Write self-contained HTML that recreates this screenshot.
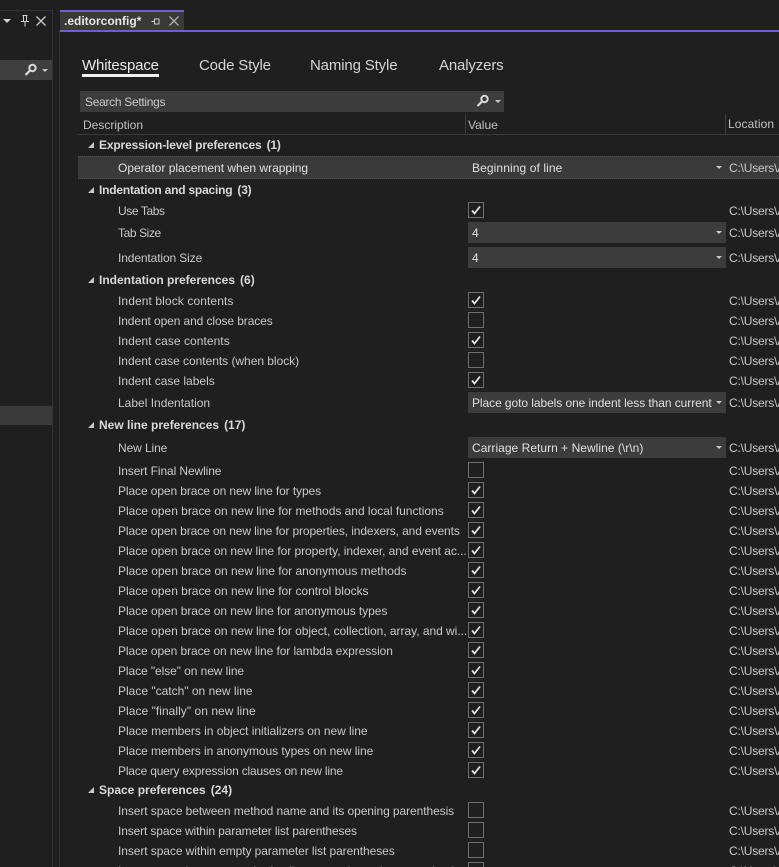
<!DOCTYPE html>
<html><head><meta charset="utf-8">
<style>
html,body{margin:0;padding:0;background:#1e1e1e}
#p{position:relative;width:779px;height:867px;overflow:hidden;background:#1f1f1f;font-family:"Liberation Sans",sans-serif;font-size:12px;color:#d0d0d0}
#p div{position:absolute}
.t{white-space:nowrap;line-height:16px;height:16px}
.l{left:118px;color:#c8c8c8}
.g{left:99px;font-weight:bold;color:#d8d8d8}
.g span{margin-left:5px}
.a{left:88px;width:0;height:0;border-style:solid;border-width:0 0 6px 6px;border-color:transparent transparent #c8c8c8 transparent}
.d{left:468px;width:258px;height:21px;background:#3c3c3c;color:#e0e0e0;line-height:21px}
.d span{position:absolute;left:4px;top:1px;white-space:nowrap}
.d i{position:absolute;right:4px;top:9px;width:0;height:0;border-left:3px solid transparent;border-right:3px solid transparent;border-top:3px solid #c8c8c8}
.u{left:729px;color:#c8c8c8;letter-spacing:-.2px}
.tb{font-size:15px;letter-spacing:-.15px;line-height:20px;height:20px;top:55px;white-space:nowrap;color:#d4d4d4}
</style></head><body><div id="p">
<div style="left:52px;top:10px;width:1px;height:857px;background:#333"></div>
<div style="left:59px;top:30px;width:1px;height:837px;background:#333"></div>
<div style="left:0;top:10px;width:53px;height:1px;background:#333"></div>
<div style="left:3px;top:19px;width:0;height:0;border-left:4px solid transparent;border-right:4px solid transparent;border-top:4px solid #d0d0d0"></div>
<svg style="position:absolute;left:19px;top:14px" width="12" height="14"><path d="M3.500 1.500h5M4.500 1.500v6M7.500 1.500v6M2 7.500h8M6 7.500v5" stroke="#d0d0d0" fill="none"/></svg>
<svg style="position:absolute;left:36px;top:16px" width="10" height="10"><path d="M.5.5l9 9M9.500 .5l-9 9" stroke="#c8c8c8" stroke-width="1.300" fill="none"/></svg>
<div style="left:0;top:60px;width:52px;height:20px;background:#3f3f3f"></div>
<svg style="position:absolute;left:24px;top:63px" width="14" height="14"><circle cx="8.500" cy="5" r="3.200" stroke="#d8d8d8" stroke-width="2" fill="none"/><path d="M6 7.500L1.500 12" stroke="#d8d8d8" stroke-width="2.200"/></svg>
<div style="left:42px;top:69px;border-left:3px solid transparent;border-right:3px solid transparent;border-top:3px solid #c8c8c8;width:0;height:0"></div>
<div style="left:0;top:406px;width:52px;height:19px;background:#3a3a3a"></div>
<div style="left:60px;top:10px;width:124px;height:20px;background:#3a3a3a"></div>
<div style="left:60px;top:10px;width:124px;height:2px;background:#7160c0"></div>
<div style="left:60px;top:30px;width:719px;height:2px;background:#7160c0"></div>
<div class="t" style="left:64px;top:13px;font-weight:bold;color:#e8e8e8">.editorconfig*</div>
<svg style="position:absolute;left:151px;top:17px" width="9" height="9"><path d="M.5 4.500h3M3.500 2v5h4.500V2z" stroke="#d0d0d0" fill="none"/></svg>
<svg style="position:absolute;left:169px;top:16px" width="10" height="10"><path d="M.5.5l9 9M9.500.5l-9 9" stroke="#c0c0c0" stroke-width="1.200" fill="none"/></svg>
<div class="tb" style="left:82px;top:56px;color:#e8e8e8">Whitespace</div>
<div style="left:82px;top:74px;width:77px;height:3px;background:#f0f0f0"></div>
<div class="tb" style="left:199px;top:56px">Code Style</div>
<div class="tb" style="left:310px;top:56px">Naming Style</div>
<div class="tb" style="left:439px;top:56px">Analyzers</div>
<div style="left:80px;top:91px;width:424px;height:21px;background:#3c3c3c"></div>
<div class="t" style="left:85px;top:94px;color:#c8c8c8;letter-spacing:-.3px">Search Settings</div>
<svg style="position:absolute;left:476px;top:94px" width="14" height="14"><circle cx="8.500" cy="5" r="3.200" stroke="#d8d8d8" stroke-width="2" fill="none"/><path d="M6 7.500L1.500 12" stroke="#d8d8d8" stroke-width="2.200"/></svg>
<div style="left:495px;top:100px;border-left:3px solid transparent;border-right:3px solid transparent;border-top:3px solid #c8c8c8;width:0;height:0"></div>
<div class="t" style="left:83px;top:117px;color:#c0c0c0">Description</div>
<div class="t" style="left:468px;top:117px;color:#c0c0c0">Value</div>
<div class="t" style="left:728px;top:116px;color:#c0c0c0;letter-spacing:.1px">Location</div>
<div style="left:465px;top:114px;width:1px;height:20px;background:#3a3a3a"></div>
<div style="left:725px;top:114px;width:1px;height:20px;background:#3a3a3a"></div>
<div style="left:78px;top:134px;width:701px;height:1px;background:#3a3a3a"></div>
<div style="left:78px;top:156px;width:701px;height:23px;background:#3a3a3a;box-sizing:border-box;border-top:1px dotted #5a5a5a;border-bottom:1px dotted #5a5a5a"></div>

<div class="a" style="top:142px"></div><div class="t g" style="top:137px;letter-spacing:-.15px">Expression-level preferences<span>(1)</span></div>
<div class="a" style="top:187px"></div><div class="t g" style="top:182px;letter-spacing:-.2px">Indentation and spacing<span>(3)</span></div>
<div class="a" style="top:277px"></div><div class="t g" style="top:272px">Indentation preferences<span>(6)</span></div>
<div class="a" style="top:422px"></div><div class="t g" style="top:417px">New line preferences<span>(17)</span></div>
<div class="a" style="top:787px"></div><div class="t g" style="top:782px">Space preferences<span>(24)</span></div>

<div class="t l" style="top:160px;color:#e0e0e0">Operator placement when wrapping</div>
<div class="t l" style="top:203px;letter-spacing:-.4px">Use Tabs</div>
<div class="t l" style="top:225px;letter-spacing:-.4px">Tab Size</div>
<div class="t l" style="top:250px;letter-spacing:-.12px">Indentation Size</div>
<div class="t l" style="top:293px;letter-spacing:.1px">Indent block contents</div>
<div class="t l" style="top:313px;letter-spacing:-.1px">Indent open and close braces</div>
<div class="t l" style="top:333px;letter-spacing:.05px">Indent case contents</div>
<div class="t l" style="top:353px;letter-spacing:-.03px">Indent case contents (when block)</div>
<div class="t l" style="top:373px">Indent case labels</div>
<div class="t l" style="top:395px">Label Indentation</div>
<div class="t l" style="top:440px;letter-spacing:-.1px">New Line</div>
<div class="t l" style="top:463px;letter-spacing:-.1px">Insert Final Newline</div>
<div class="t l" style="top:483px;letter-spacing:-.1px">Place open brace on new line for types</div>
<div class="t l" style="top:503px;letter-spacing:-.02px">Place open brace on new line for methods and local functions</div>
<div class="t l" style="top:523px;letter-spacing:-.11px">Place open brace on new line for properties, indexers, and events</div>
<div class="t l" style="top:543px;letter-spacing:-.05px">Place open brace on new line for property, indexer, and event ac...</div>
<div class="t l" style="top:563px;letter-spacing:-.02px">Place open brace on new line for anonymous methods</div>
<div class="t l" style="top:583px;letter-spacing:-.02px">Place open brace on new line for control blocks</div>
<div class="t l" style="top:603px;letter-spacing:-.06px">Place open brace on new line for anonymous types</div>
<div class="t l" style="top:623px;letter-spacing:-.03px">Place open brace on new line for object, collection, array, and wi...</div>
<div class="t l" style="top:643px;letter-spacing:-.08px">Place open brace on new line for lambda expression</div>
<div class="t l" style="top:663px;letter-spacing:-.08px">Place "else" on new line</div>
<div class="t l" style="top:683px">Place "catch" on new line</div>
<div class="t l" style="top:703px;letter-spacing:.04px">Place "finally" on new line</div>
<div class="t l" style="top:723px;letter-spacing:-.04px">Place members in object initializers on new line</div>
<div class="t l" style="top:743px;letter-spacing:-.05px">Place members in anonymous types on new line</div>
<div class="t l" style="top:763px;letter-spacing:-.19px">Place query expression clauses on new line</div>
<div class="t l" style="top:803px;letter-spacing:-.08px">Insert space between method name and its opening parenthesis</div>
<div class="t l" style="top:823px;letter-spacing:-.13px">Insert space within parameter list parentheses</div>
<div class="t l" style="top:843px;letter-spacing:-.08px">Insert space within empty parameter list parentheses</div>
<div class="t l" style="top:863px;letter-spacing:-.08px">Insert space between method call name and opening parenthesis</div>

<div class="d" style="top:157px;background:none"><span style="letter-spacing:.1px">Beginning of line</span><i></i></div>
<div class="d" style="top:222px"><span>4</span><i></i></div>
<div class="d" style="top:247px"><span>4</span><i></i></div>
<div class="d" style="top:392px"><span style="letter-spacing:-.07px">Place goto labels one indent less than current</span><i></i></div>
<div class="d" style="top:437px"><span style="letter-spacing:.03px">Carriage Return + Newline (\r\n)</span><i></i></div>

<svg style="position:absolute;left:468px;top:0" width="16" height="880" fill="none" stroke="#6e6e6e">
<defs><g id="k"><rect x=".5" y=".5" width="15" height="15"/><path d="M4 8.500l2.500 3L12 4.500" stroke="#e4e4e4" stroke-width="1.800"/></g><rect id="e" x=".5" y=".5" width="15" height="15"/></defs>
<use href="#k" y="202"/><use href="#k" y="292"/><use href="#e" y="312"/><use href="#k" y="332"/><use href="#e" y="352"/><use href="#k" y="372"/><use href="#e" y="462"/>
<use href="#k" y="482"/><use href="#k" y="502"/><use href="#k" y="522"/><use href="#k" y="542"/><use href="#k" y="562"/><use href="#k" y="582"/><use href="#k" y="602"/><use href="#k" y="622"/><use href="#k" y="642"/><use href="#k" y="662"/><use href="#k" y="682"/><use href="#k" y="702"/><use href="#k" y="722"/><use href="#k" y="742"/><use href="#k" y="762"/>
<use href="#e" y="802"/><use href="#e" y="822"/><use href="#e" y="842"/><use href="#e" y="862"/>
</svg>

<div class="t u" style="top:160px">C:\Users\A</div>
<div class="t u" style="top:203px">C:\Users\A</div>
<div class="t u" style="top:225px">C:\Users\A</div>
<div class="t u" style="top:250px">C:\Users\A</div>
<div class="t u" style="top:293px">C:\Users\A</div>
<div class="t u" style="top:313px">C:\Users\A</div>
<div class="t u" style="top:333px">C:\Users\A</div>
<div class="t u" style="top:353px">C:\Users\A</div>
<div class="t u" style="top:373px">C:\Users\A</div>
<div class="t u" style="top:395px">C:\Users\A</div>
<div class="t u" style="top:440px">C:\Users\A</div>
<div class="t u" style="top:463px">C:\Users\A</div>
<div class="t u" style="top:483px">C:\Users\A</div>
<div class="t u" style="top:503px">C:\Users\A</div>
<div class="t u" style="top:523px">C:\Users\A</div>
<div class="t u" style="top:543px">C:\Users\A</div>
<div class="t u" style="top:563px">C:\Users\A</div>
<div class="t u" style="top:583px">C:\Users\A</div>
<div class="t u" style="top:603px">C:\Users\A</div>
<div class="t u" style="top:623px">C:\Users\A</div>
<div class="t u" style="top:643px">C:\Users\A</div>
<div class="t u" style="top:663px">C:\Users\A</div>
<div class="t u" style="top:683px">C:\Users\A</div>
<div class="t u" style="top:703px">C:\Users\A</div>
<div class="t u" style="top:723px">C:\Users\A</div>
<div class="t u" style="top:743px">C:\Users\A</div>
<div class="t u" style="top:763px">C:\Users\A</div>
<div class="t u" style="top:803px">C:\Users\A</div>
<div class="t u" style="top:823px">C:\Users\A</div>
<div class="t u" style="top:843px">C:\Users\A</div>
<div class="t u" style="top:863px">C:\Users\A</div>
</div></body></html>
